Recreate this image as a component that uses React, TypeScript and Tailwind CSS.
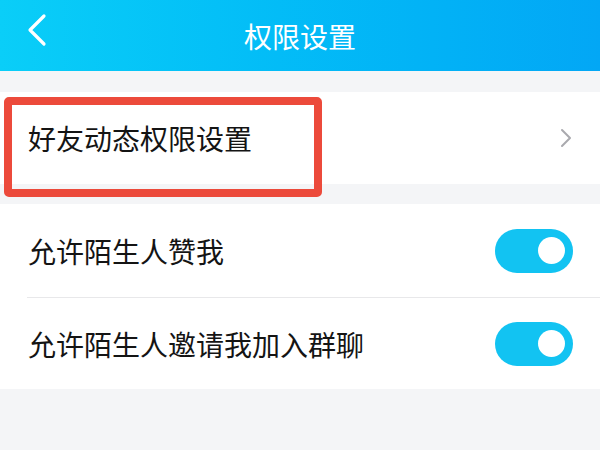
import React from "react";

function Toggle() {
  return (
    <div className="flex h-[44px] w-[78px] items-center justify-end rounded-full bg-[#12c3f2] pr-[8px]">
      <div className="h-[27px] w-[27px] rounded-full bg-white" />
    </div>
  );
}

export default function App() {
  const font = { fontFamily: '"Noto Sans CJK SC", "Noto Sans", sans-serif' };
  return (
    <div className="relative h-[450px] w-[600px] overflow-hidden bg-[#f4f5f7]" style={font}>
      <div className="relative flex h-[71px] items-center justify-center bg-gradient-to-r from-[#0acef8] to-[#03a7f5]">
        <svg className="absolute left-[26px] top-[13px]" width="22" height="34" viewBox="0 0 22 34">
          <polyline points="18,3 4,17 18,31" fill="none" stroke="white" strokeWidth="3.2" strokeLinecap="round" strokeLinejoin="round" />
        </svg>
        <span className="text-[28px] leading-none text-white">权限设置</span>
      </div>
      <div className="h-[21px]" />
      <div className="flex h-[92px] items-center justify-between bg-white pl-[28px] pr-[28px]">
        <span className="text-[28px] leading-none text-[#141414]">好友动态权限设置</span>
        <svg width="12" height="20" viewBox="0 0 12 20">
          <polyline points="2,2 10,10 2,18" fill="none" stroke="#a9a9ae" strokeWidth="2" strokeLinecap="round" strokeLinejoin="round" />
        </svg>
      </div>
      <div className="h-[20px]" />
      <div className="bg-white">
        <div className="flex h-[93px] items-center justify-between pl-[28px] pr-[27px]">
          <span className="text-[28px] leading-none text-[#141414]">允许陌生人赞我</span>
          <Toggle />
        </div>
        <div className="ml-[27px] h-px bg-[#e8e8ea]" />
        <div className="flex h-[91px] items-center justify-between pl-[28px] pr-[27px]">
          <span className="text-[28px] leading-none text-[#141414]">允许陌生人邀请我加入群聊</span>
          <Toggle />
        </div>
      </div>
      <div className="absolute left-[4px] top-[97px] h-[100px] w-[318px] rounded-[5px] border-[8px] border-[#ec4a3b]" />
    </div>
  );
}
